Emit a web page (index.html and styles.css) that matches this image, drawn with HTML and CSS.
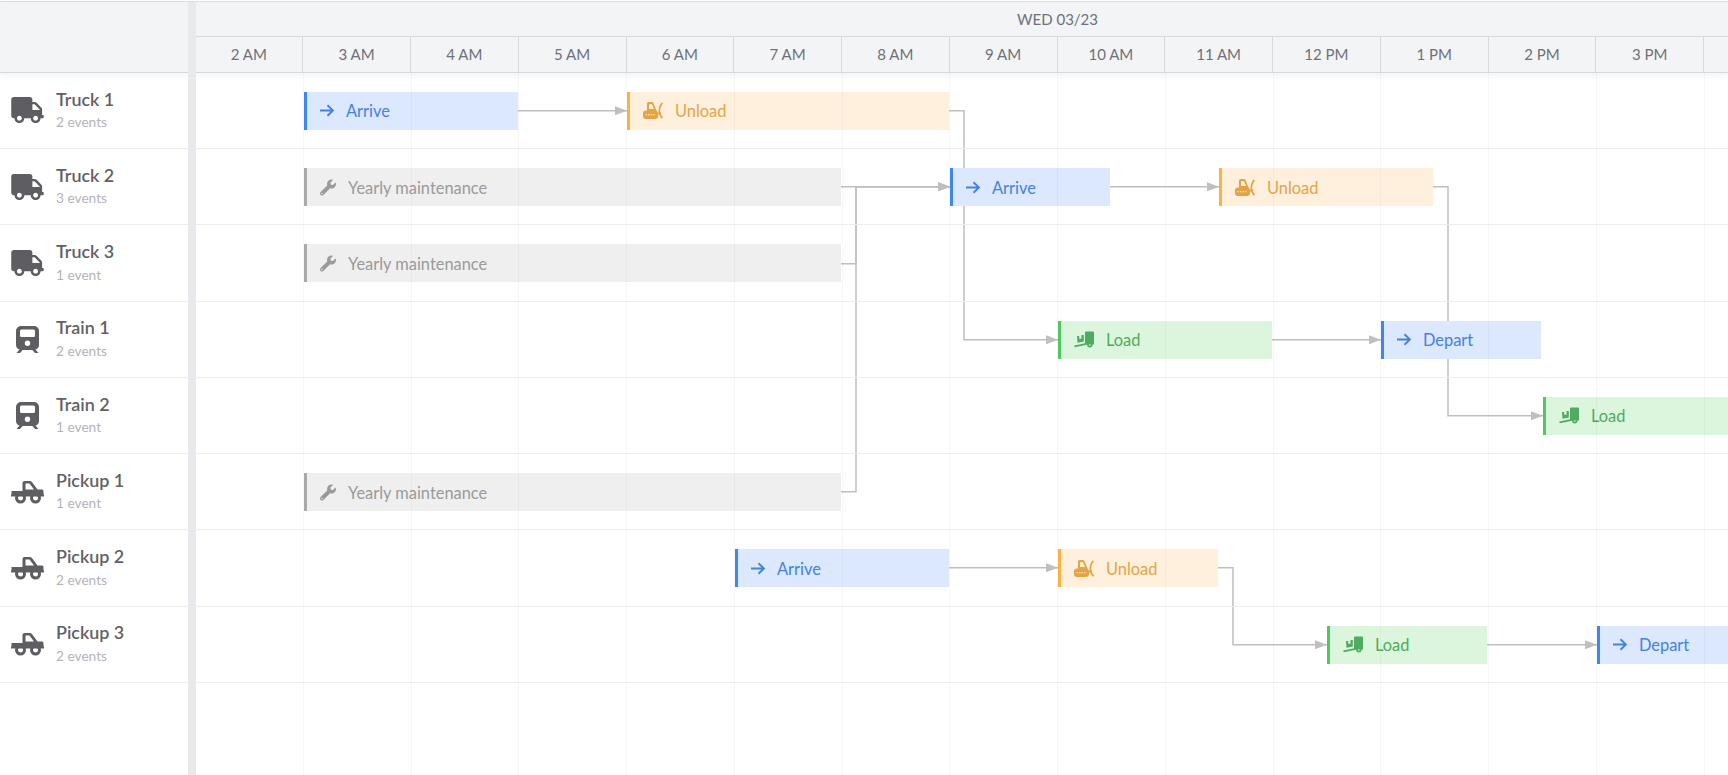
FILE: index.html
```html
<html lang="en">
	<head>
		<meta charset="UTF-8">
		<meta name="viewport" content="width=device-width, initial-scale=1">
		<title>Vehicle Schedule</title>
		<link rel="stylesheet" href="styles.css">
	</head>
	<body>

		<svg class="icon-sheet" aria-hidden="true">
			<symbol id="i-truck" viewBox="0 0 640 512">
				<path d="M624 352h-16V243.9c0-12.7-5.1-24.9-14.1-33.9L494 110.1c-9-9-21.2-14.1-33.9-14.1H416V48c0-26.5-21.5-48-48-48H48C21.5 0 0 21.5 0 48v320c0 26.5 21.5 48 48 48h16c0 53 43 96 96 96s96-43 96-96h128c0 53 43 96 96 96s96-43 96-96h48c8.8 0 16-7.2 16-16v-32c0-8.8-7.2-16-16-16zM160 464c-26.5 0-48-21.5-48-48s21.5-48 48-48 48 21.5 48 48-21.5 48-48 48zm320 0c-26.5 0-48-21.5-48-48s21.5-48 48-48 48 21.5 48 48-21.5 48-48 48zm80-208H416V144h44.1l99.9 99.9V256z"/>
			</symbol>
			<symbol id="i-train" viewBox="0 0 23 27">
				<path fill-rule="evenodd" d="M5 0h13a5 5 0 0 1 5 5v14a5 5 0 0 1-5 5H5a5 5 0 0 1-5-5V5a5 5 0 0 1 5-5zM5.500 3.500a1.500 1.500 0 0 0-1.500 1.500v4.500a1.500 1.500 0 0 0 1.500 1.500h12a1.500 1.500 0 0 0 1.500-1.500V5a1.500 1.500 0 0 0-1.500-1.500zM11.500 14.500a2.700 2.700 0 1 0 0 5.400 2.700 2.700 0 0 0 0-5.400z"/>
				<path d="M4 23h3.500l-3.500 4H.5zM15.500 23H19l3.500 4H19z"/>
			</symbol>
			<symbol id="i-pickup" viewBox="0 0 33 24">
				<path fill-rule="evenodd" d="M11.500 11V3a2 2 0 0 1 2-2h5a3.500 3.500 0 0 1 2.800 1.400L26.500 9.500h4.500a1.500 1.500 0 0 1 1.500 1.500v3.500h.5v2H0v-2h.5V11zM14.500 3.500V9.500h8.500L18.500 3.500z"/>
				<path fill-rule="evenodd" d="M9.500 12.500a5.500 5.500 0 1 0 0 11 5.500 5.500 0 0 0 0-11zm0 3a2.500 2.500 0 1 1 0 5 2.500 2.500 0 0 1 0-5zM24.500 12.500a5.500 5.500 0 1 0 0 11 5.500 5.500 0 0 0 0-11zm0 3a2.500 2.500 0 1 1 0 5 2.500 2.500 0 0 1 0-5z"/>
			</symbol>
			<symbol id="i-arrow" viewBox="0 0 14 12">
				<path d="M0 6h13M7.500 .7 13 6l-5.500 5.300" fill="none" stroke="currentColor" stroke-width="1.900"/>
			</symbol>
			<symbol id="i-wrench" viewBox="0 0 512 512">
				<path d="M507.730 109.100c-2.240-9.030-13.540-12.090-20.120-5.510l-74.360 74.360-67.880-11.310-11.310-67.880 74.360-74.360c6.620-6.620 3.430-17.900-5.660-20.160-47.380-11.740-99.550.91-136.580 37.930-39.640 39.640-50.550 97.100-34.050 147.200L18.740 402.760c-24.990 24.990-24.990 65.510 0 90.500 24.990 24.990 65.510 24.990 90.500 0l213.210-213.210c50.120 16.710 107.470 5.680 147.370-34.220 37.070-37.070 49.700-89.320 37.910-136.730zM64 472c-13.250 0-24-10.750-24-24 0-13.260 10.750-24 24-24s24 10.740 24 24c0 13.250-10.750 24-24 24z"/>
			</symbol>
			<symbol id="i-plow" viewBox="0 0 20 17">
				<path fill-rule="evenodd" d="M4 9V1.500A1.500 1.500 0 0 1 5.500 0H9a1.500 1.500 0 0 1 1.400 1L13.800 9zM6 2.200V7h5L9 2.200z"/>
				<path fill-rule="evenodd" d="M3 8.500h9a3 3 0 0 1 3 3v2.500a3 3 0 0 1-3 3H3a3 3 0 0 1-3-3v-2.500a3 3 0 0 1 3-3zM2.500 12.200v1H4v-1zm2.500 0v1h1.500v-1zm2.500 0v1H9v-1zm2.500 0v1h1.500v-1z"/>
				<path d="M15 10.500h3v2h-3z"/>
				<path d="M19.300 .8C16.700 4 16.300 6 16.300 8.500s.4 4.500 3 7.700" fill="none" stroke="currentColor" stroke-width="1.800"/>
			</symbol>
			<symbol id="i-load" viewBox="0 0 20 16">
				<path d="M12 0h7a1 1 0 0 1 1 1v12h-8.200l-.8-.5V1a1 1 0 0 1 1-1z"/>
				<path fill-rule="evenodd" d="M15.800 10.600a2.700 2.700 0 1 0 0 5.400 2.700 2.700 0 0 0 0-5.400zm0 1.700a1 1 0 1 1 0 2 1 1 0 0 1 0-2z"/>
				<path d="M.3 14 12.500 11.500l.4 1.800L.7 15.800z"/>
				<path d="M3 4.500h2.200v2.800h2.300V3.500h2.300v6.500L3.500 11.300z"/>
			</symbol>
		</svg>

		<div class="scheduler">

			<div class="resources">
				<div class="corner"></div>
				<div class="resource">
					<svg class="resource-icon icon-truck"><use href="#i-truck"/></svg>
					<div><strong>Truck 1</strong><small>2 events</small></div>
				</div>
				<div class="resource">
					<svg class="resource-icon icon-truck"><use href="#i-truck"/></svg>
					<div><strong>Truck 2</strong><small>3 events</small></div>
				</div>
				<div class="resource">
					<svg class="resource-icon icon-truck"><use href="#i-truck"/></svg>
					<div><strong>Truck 3</strong><small>1 event</small></div>
				</div>
				<div class="resource">
					<svg class="resource-icon icon-train"><use href="#i-train"/></svg>
					<div><strong>Train 1</strong><small>2 events</small></div>
				</div>
				<div class="resource">
					<svg class="resource-icon icon-train"><use href="#i-train"/></svg>
					<div><strong>Train 2</strong><small>1 event</small></div>
				</div>
				<div class="resource">
					<svg class="resource-icon icon-pickup"><use href="#i-pickup"/></svg>
					<div><strong>Pickup 1</strong><small>1 event</small></div>
				</div>
				<div class="resource">
					<svg class="resource-icon icon-pickup"><use href="#i-pickup"/></svg>
					<div><strong>Pickup 2</strong><small>2 events</small></div>
				</div>
				<div class="resource">
					<svg class="resource-icon icon-pickup"><use href="#i-pickup"/></svg>
					<div><strong>Pickup 3</strong><small>2 events</small></div>
				</div>
			</div>

			<div class="splitter"></div>

			<div class="schedule">
				<div class="time-header">
					<div class="day">WED 03/23</div>
					<div class="ticks">
						<div>2 AM</div>
						<div>3 AM</div>
						<div>4 AM</div>
						<div>5 AM</div>
						<div>6 AM</div>
						<div>7 AM</div>
						<div>8 AM</div>
						<div>9 AM</div>
						<div>10 AM</div>
						<div>11 AM</div>
						<div>12 PM</div>
						<div>1 PM</div>
						<div>2 PM</div>
						<div>3 PM</div>
						<div></div>
					</div>
				</div>

				<div class="timeline">
					<!-- connectors sit under the bars, coordinates are page pixels -->
					<svg class="links" viewBox="196 72.750 1532 702">
						<defs>
							<marker id="head" viewBox="0 0 12 9" refX="12" refY="4.500" markerWidth="12" markerHeight="9" markerUnits="userSpaceOnUse" orient="auto">
								<path d="M0 0 12 4.500 0 9z"/>
							</marker>
						</defs>
						<path d="M518 110.500H627"/>
						<path d="M949 110.500H964V339.500H1058"/>
						<path d="M841 186.500H950"/>
						<path d="M841 263.500H856V186.500H950"/>
						<path d="M841 491.500H856V186.500H950"/>
						<path d="M1110 186.500H1219"/>
						<path d="M1433 186.500H1448V415.500H1543"/>
						<path d="M1272 339.500H1381"/>
						<path d="M949 567.500H1058"/>
						<path d="M1218 567.500H1233V644.500H1327"/>
						<path d="M1487 644.500H1597"/>
					</svg>

					<div class="row">
						<div class="event blue" style="left:108px;width:214px"><svg class="icon-arrow"><use href="#i-arrow"/></svg>Arrive</div>
						<div class="event orange" style="left:431px;width:322px"><svg class="icon-plow"><use href="#i-plow"/></svg>Unload</div>
					</div>
					<div class="row">
						<div class="event gray" style="left:108px;width:537px"><svg class="icon-wrench"><use href="#i-wrench"/></svg>Yearly maintenance</div>
						<div class="event blue" style="left:754px;width:160px"><svg class="icon-arrow"><use href="#i-arrow"/></svg>Arrive</div>
						<div class="event orange" style="left:1023px;width:214px"><svg class="icon-plow"><use href="#i-plow"/></svg>Unload</div>
					</div>
					<div class="row">
						<div class="event gray" style="left:108px;width:537px"><svg class="icon-wrench"><use href="#i-wrench"/></svg>Yearly maintenance</div>
					</div>
					<div class="row">
						<div class="event green" style="left:862px;width:214px"><svg class="icon-load"><use href="#i-load"/></svg>Load</div>
						<div class="event blue" style="left:1185px;width:160px"><svg class="icon-arrow"><use href="#i-arrow"/></svg>Depart</div>
					</div>
					<div class="row">
						<div class="event green" style="left:1347px;width:214px"><svg class="icon-load"><use href="#i-load"/></svg>Load</div>
					</div>
					<div class="row">
						<div class="event gray" style="left:108px;width:537px"><svg class="icon-wrench"><use href="#i-wrench"/></svg>Yearly maintenance</div>
					</div>
					<div class="row">
						<div class="event blue" style="left:539px;width:214px"><svg class="icon-arrow"><use href="#i-arrow"/></svg>Arrive</div>
						<div class="event orange" style="left:862px;width:160px"><svg class="icon-plow"><use href="#i-plow"/></svg>Unload</div>
					</div>
					<div class="row">
						<div class="event green" style="left:1131px;width:160px"><svg class="icon-load"><use href="#i-load"/></svg>Load</div>
						<div class="event blue" style="left:1401px;width:214px"><svg class="icon-arrow"><use href="#i-arrow"/></svg>Depart</div>
					</div>

					<div class="grid-lines"></div>
				</div>
			</div>

		</div>

	</body>
</html>
```

FILE: styles.css
```css
html,
body {
	height: 100%;
}
body {
	margin: 0;
	padding-top: 1px;
	box-sizing: border-box;
	overflow: hidden;
	background: #fff;
	font-family: "Lato", "Open Sans", sans-serif;
	color: #5b5b60;
}
.icon-sheet {
	display: none;
}

.scheduler {
	display: flex;
	height: 100%;
	border-top: 1px solid #dcdde0;
}

/* left column */
.resources {
	flex: 0 0 188px;
}
.corner {
	height: 69.750px;
	background: #f3f4f6;
	border-bottom: 1px solid #d8d9dc;
	position: relative;
	z-index: 2;
	box-shadow: 0 3px 7px rgba(0, 0, 0, .05);
}
.resource {
	display: flex;
	align-items: center;
	gap: 12px;
	box-sizing: border-box;
	height: 76.250px;
	padding-left: 11px;
	border-bottom: 1px solid #ededf0;
}
.resource-icon {
	flex: 0 0 33px;
	fill: #5e5e62;
}
.icon-truck {
	height: 26px;
}
.icon-train {
	height: 27px;
}
.icon-pickup {
	height: 24px;
}
.resource strong {
	display: block;
	font-size: 17.900px;
	font-weight: 600;
	line-height: 21px;
	color: #616166;
}
.resource small {
	display: block;
	margin-top: 1.500px;
	font-size: 13.700px;
	line-height: 21px;
	color: #b3b3b9;
}

.splitter {
	flex: 0 0 8px;
	background: #e8e9ec;
	position: relative;
	z-index: 3;
}

/* time axis */
.schedule {
	flex: 1;
	min-width: 0;
	overflow: hidden;
}
.time-header {
	position: relative;
	z-index: 2;
	background: #f3f4f6;
	border-bottom: 1px solid #d8d9dc;
	box-shadow: 0 3px 7px rgba(0, 0, 0, .05);
	color: #6e7179;
	font-size: 15px;
}
.day {
	width: 1724px;
	height: 34px;
	margin-left: -.500px;
	line-height: 34px;
	text-align: center;
	box-shadow: 0 1px 0 #d8d9dc;
	margin-bottom: 1px;
}
.ticks {
	display: flex;
	height: 34.750px;
	margin-left: -.500px;
}
.ticks div {
	flex: 0 0 107.750px;
	box-sizing: border-box;
	line-height: 35px;
	text-align: center;
	border-right: 1px solid #d8d9dc;
}

/* rows and bars */
.timeline {
	position: relative;
	height: 702px;
}
.row {
	position: relative;
	box-sizing: border-box;
	height: 76.250px;
	border-bottom: 1px solid #ededf0;
}
.links {
	position: absolute;
	left: 0;
	top: 0;
	width: 1532px;
	height: 702px;
}
.links path {
	fill: none;
	stroke: #bfbfbf;
	stroke-width: 1.500;
	marker-end: url(#head);
}
.links marker path {
	fill: #bfbfbf;
	stroke: none;
	marker-end: none;
}
.event {
	position: absolute;
	top: 19.200px;
	display: flex;
	align-items: center;
	gap: 12px;
	box-sizing: border-box;
	height: 38px;
	padding-left: 13px;
	border-left: 3px solid;
	font-size: 16.400px;
	white-space: nowrap;
}
.event svg {
	height: 17px;
	flex: none;
	fill: currentColor;
}
.icon-arrow {
	width: 14px;
}
.icon-wrench {
	width: 16px;
}
.icon-plow,
.icon-load {
	width: 20px;
}
.blue {
	background: #dce8fd;
	border-color: #3f86f5;
	color: #4382e2;
}
.orange {
	background: #fff0de;
	border-color: #fdb13e;
	color: #e5a444;
}
.green {
	background: #dcf6dd;
	border-color: #4fc95f;
	color: #4fab5f;
}
.gray {
	background: #efefef;
	border-color: #a9a9a9;
	color: #9a9a9a;
}
.grid-lines {
	position: absolute;
	inset: 0 0 0 -.500px;
	pointer-events: none;
	background: repeating-linear-gradient(to right, transparent 0 106.750px, rgba(0, 0, 0, .035) 106.750px 107.750px);
}
```
